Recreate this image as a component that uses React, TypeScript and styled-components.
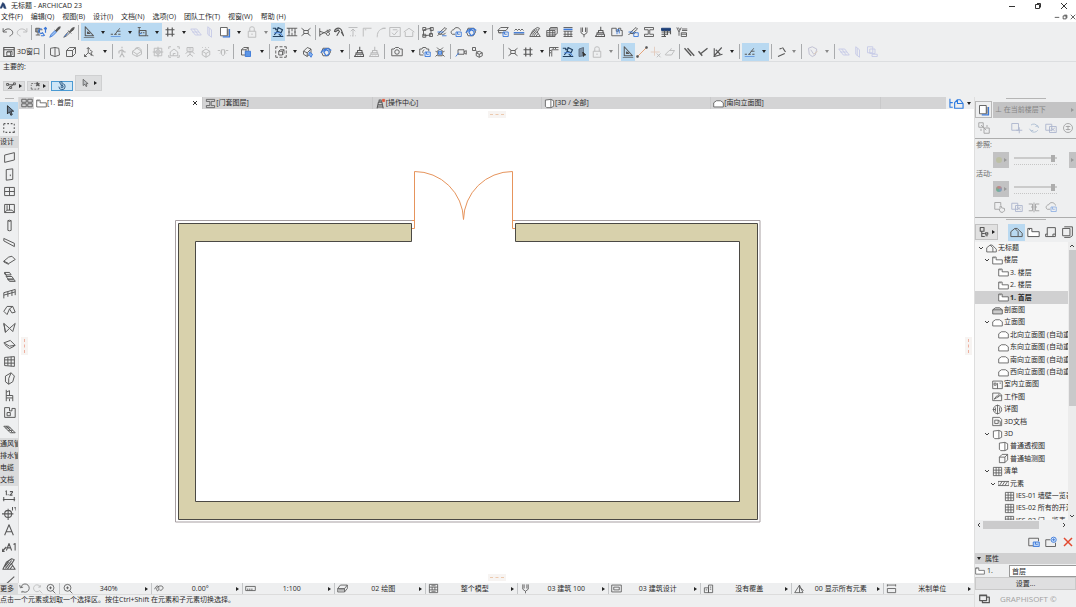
import React from 'react';
import styled, { createGlobalStyle, css } from 'styled-components';

const ink = '#585858';
const blue = '#3b78d8';
const sky = '#b9d9f1';
const bar = '#eeeff0';
const line = '#c4c6c8';

const GlobalStyle = createGlobalStyle`
  *, *::before, *::after { box-sizing: border-box; }
  html, body, #root { height: 100%; }
  body {
    margin: 0;
    background: ${bar};
    color: #2a2a2a;
    font: 7px/10px "Open Sans", "Noto Sans CJK SC", sans-serif;
    overflow: hidden;
  }
  button, input, select { font: inherit; color: inherit; }
  button { margin: 0; padding: 0; border: 0; background: none; white-space: nowrap; }
  ul { margin: 0; padding: 0; list-style: none; }
`;

/* ---------- icons ---------- */

type Stroke = [d: string, stroke?: string, fill?: string, width?: number];

const icons: Record<string, Stroke[]> = {
  undo: [['M1.5 3v5h5M2 7.500C4 4 9 2.500 12.500 5.500S14 12 10 13.500']],
  redo: [['M14.500 3v5h-5M14 7.500C12 4 7 2.500 3.500 5.500S2 12 6 13.500']],
  search: [['M1 3h5v5H1zM7 5h3M4 8v4M1 12h6', ink, '#4a4a4a88'], ['M9 4a3 3 0 1 0 1 5l3 4M8 13h4M14 2v7M12 4l2-2 2 2', blue, 'none', 1.6]],
  dropper: [['M1 15l2-4 5-5 2 2-5 5z', blue, '#9cc0f0'], ['M8 5l3 3M9 6l3-4 3-1-1 3-4 3z', ink, ink]],
  syringe: [['M1 15l3-4 4-4 1 2-4 4z', ink], ['M7 6l4 4M9 7l3-4 3-1-1 3-4 3z', ink, ink], ['M2 14l4-4', blue]],
  setsquare: [['M3 1v12h11zM6 8v2h3z', ink, 'none', 1.4], ['M1 15.500h14', ink, 'none', 1]],
  guides: [['M1 11h3m2 0h3m2 0h3', ink, 'none', 1.6], ['M6 12l7-9M9 7h5', ink], ['M1 14h13', blue, 'none', 0.8]],
  tracker: [['M3 2v8M1 2h4', ink], ['M3 6h9v7H3zM5 9h2m1 0h2M13 13h2', ink, 'none', 1.5], ['M3 10h3', blue]],
  grid: [['M5 2v12M11 2v12M2 5h12M2 11h12', ink, 'none', 1.6]],
  planeH: [['M1 4h8l6 8H7zM5 4l6 8M3 8h9', '#7d87d8']],
  planeV: [['M5 1l5 4v10l-5-4zM7 3v10', '#7d87d8']],
  sheets: [['M2 2h9v11H2z', ink, '#fff'], ['M5 14.500h9V4', blue, 'none', 1.6], ['M12 4v9', ink]],
  lock: [['M3 7h10v8H3zM5 7V3q0-2 3-2t3 2v4M8 10v2', ink]],
  gravity: [['M1 3h4v2h3M8 2l6 3-2 4-5-2zM3 12l4-5M1 14h14M9 11l3 2', '#23405f', 'none', 1.6], ['M3 9h8l3 4', blue]],
  stretch: [['M1 3h14M1 13h14M4 3v10M8 3v4m0 2v4M12 3v10M3 8h2m6 0h2', ink]],
  corners: [['M2 3l4 3M14 3l-4 3M2 13l4-3M14 13l-4-3M5 6h6v4H5z', ink]],
  trim: [['M1 3v11M1 7l9 3M1 12l13-7M10 10a2 2 0 1 0 4 1 2 2 0 1 0-4-1M11 5a2 2 0 1 0 3-1', ink]],
  wrench: [['M2 8c0-5 6-7 9-3l3 8-3-5M3 8l4-3 2 3M8 8l-3 5', ink, 'none', 1.5]],
  liftUp: [['M2 2h12M8 4v10M5 7l3-3 3 3M4 13h1m2 0h1m3 0h1', ink]],
  angle: [['M3 14V3h11M5 5h2', ink]],
  fillet: [['M3 14C3 7 7 3 14 3M3 14v1M10 3h4', ink]],
  box1: [['M1 2h14v12H1zM5 5h6M4 9l3 3 5-6', ink]],
  house: [['M1 8l7-5 7 5M3 8v6h10V8', ink]],
  nodes: [['M2 13V5l10-2v9zM1 2h4v4H1zM11 2h4v4h-4zM1 11h4v4H1zM10 10h4v4h-4z', ink]],
  pen: [['M2 13c3-5 8 1 11-4M3 10l9-8 2 2-8 7z', ink], ['M2 8h8M8 13h6', blue]],
  cloudSave: [['M3 11C0 9 2 5 5 5c1-4 8-4 9 1M3 11h4', ink], ['M8 8h7v6H8zM10 8v3h3', blue]],
  orbit: [['M4 3h8l2 5-3 5H4L2 8z', ink], ['M1 9c4-6 10-7 14-3M5 8l3-3 4 2v4l-4 2z', blue, 'none', 1.6]],
  slabSave: [['M1 6l4-4h10l-3 4zM3 9h6M2 6v3l3 0', ink], ['M8 8h7v6H8zM10 8v3h3', blue]],
  waves: [['M2 6l2-2 2 2 2-2 2 2 2-2 2 2', ink], ['M1 9h14', blue, 'none', 1.8], ['M1 11h14', ink]],
  hatch: [['M1 14L5 6l6-4 3 1-3 5 4 6zM4 13l7-9M6 14l5-7M9 14l3-4M3 11l5-6', ink]],
  layers: [['M1 6h11v8H1zM4 6l2-4h9v8l-3 2M1 9h11M1 12h11M5 6v8M9 6v8M4 4h10', ink]],
  bricks: [['M2 2h12M2 7h12M2 11h12M2 14h12M4 7v4m4-4v4m4-4v4M4 11v3m4-3v3m4-3v3', ink], ['M2 4.500h12', blue, 'none', 2]],
  pens: [['M4 2v7l4 3 4-3V2M8 12v3M6 2v6M10 2v6', ink]],
  brush: [['M9 1v5M6 6h6v3H6zM4 9h9v2H4zM4 11l-2 3h12v-3M6 14v-1m4 1v-1', ink, 'none', 1.4]],
  zones: [['M1 3h6v4h3V3h3v3h2v7H1z', ink], ['M8 11V5h3v5', blue]],
  penSave: [['M2 12c3-5 6 1 10-4M4 9l8-7 2 2-7 6z', ink], ['M2 8h6M9 9h6v5H9z', blue]],
  ibeam: [['M2 2h12v3H9v6h5v3H2v-3h5V5H2z', ink]],
  sched: [['M2 3h12v3H2z', '#1d3f78', '#1d3f78'], ['M2 8h12M2 11h8M2 14h6M6 6v8M10 6v6M14 6v5', ink, 'none', 1.5]],
  mix: [['M1 2l3 6v5M7 2L4 8M3 2l2 3M8 4h7M8 6h7M7 9h7v5H7zM7 11h7', ink]],
  window3d: [['M1 2h14v12H1zM1 5h14', ink, 'none', 1.6], ['M5 8l2-1h5v5l-2 1H5zM5 8h5v5M10 8l2-1', ink]],
  perspective: [['M2 3l6-1v12l-6-2zM8 2l5 1 1 9-6 2', ink]],
  axon: [['M2 6l4-4h8v8l-4 4H2zM2 6h8v8M10 6l4-4', ink]],
  axes: [['M7 9V2M7 9l-5 5M7 9l7 4M5 4l2-2 2 2M2 11v3h3M9 5l4 3M11 8v5', ink]],
  walk: [['M8 1v2M8 5l-4 2v3M8 5l3 3 2 0M8 5v5l-3 5M8 10l3 5', ink, 'none', 1.5]],
  cubeRot: [['M2 7l6-4 6 4-6 4zM2 7v4l6 3 6-3V7M8 11v3M5 4c4-4 8-1 9 2', ink]],
  target: [['M3 3h10v10H3zM8 1v14M1 8h14M5 8a3 3 0 1 0 6 0 3 3 0 1 0-6 0', ink]],
  frame: [['M1 4V1h3m8 0h3v3m0 8v3h-3M4 15H1v-3M3 8l5-4 5 4v5H3zM7 13v-3h3', ink]],
  person: [['M4 2h8v5H4zM8 7v5M2 10l3-2h6l3 2M4 14l4-3 4 3M6 4h4', ink]],
  cubeDot: [['M3 7l5-3 5 3v5l-5 3-5-3zM3 7l5 3 5-3M8 10v5M3 2h1m3 0h1m3 0h1', ink]],
  section: [['M1 6h3l2 2-2 2M15 6h-3l-2 2 2 2M6 5h4v6l-2 2-2-2z', ink]],
  copy3d: [['M2 5l3-3h6v5M2 5h6v7H2zM8 5l3-3', ink], ['M7 7h7v7H7z', blue, '#5c95e5']],
  marquee3d: [['M1 1h3m2 0h4m2 0h3v3m0 2v4m0 2v3h-3m-2 0H6m-2 0H1v-3m0-2V6m0-2V1', ink], ['M5 7l2-2h5v5l-2 2H5zM5 7h5v5M10 7l2-2', ink]],
  cubeFill: [['M2 7l5-5 5 2v5l-5 5-5-3zM2 7l5 2 5-5M7 9v5', ink], ['M10 8l4 3-2 4-3-4z', blue, '#8ab4f0']],
  camera: [['M1 4h3l2-2h4l2 2h3v9H1zM5 8a3 3 0 1 0 6 0 3 3 0 1 0-6 0', ink]],
  cameraSave: [['M6 12H1V4h3l1-2h4l1 2h3v3M7 5a3 3 0 0 0-1 5', ink], ['M8 8h7v6H8zM10 8v3h3', blue, '#dceafd']],
  sun: [['M5 6q3-3 6 0v7H5zM6 4L4 2M10 4l2-2M2 7l2 1m8 0l2-1M2 14l2-2m8 0l2 2', ink], ['M6 7h4v4H6z', blue, '#8ab4f0']],
  video: [['M4 5h8v6H4zM12 8l3-2v5l-3-2', ink], ['M1 14l4-5', blue]],
  chain: [['M2 2h4v4H2zM7 9l4-2 4 2v4l-4 2-4-2zM7 9l4 2 4-2M11 11v4M6 6l3 2', ink]],
  ruler: [['M2 14V2h12M5 14V5h9M2 6h2m-2 3h2M7 2v2m3-2v2', ink]],
  column: [['M4 4l6-2v11l-6 1z', '#5b6b7d', '#7e93a8'], ['M9 8l4 4h-2l-1 2z', '#333', '#333']],
  rubber: [['M2 14L14 2', '#e39a6c'], ['M1 13h2v2H1zM13 1h2v2h-2z', ink, ink]],
  cross: [['M6 1v12M1 8h12', '#d08a62'], ['M9 10l5 5M14 10l-5 5', ink]],
  eraser: [['M2 11l5-5h7l-4 6H2zM8 6l2-3', ink]],
  parallel: [['M2 3l9 10M6 3l9 10', ink, 'none', 1.8]],
  perp: [['M2 7l5 6M4 11L14 3', ink, 'none', 1.8]],
  bisect: [['M2 14L13 2M3 3v11l11-3M5 5l6 6', ink, 'none', 1.5]],
  surface: [['M9 3l-3 1M10 2l4 6M13 10l-9 4', ink, 'none', 1.6]],
  morph: [['M2 3l5-2 6 3-2 8-4 2-4-3zM5 5l4 6', '#65639a'], ['M9 11l5-4', '#b5793a']],
  groupBoxes: [['M2 1h7v8H2zM5 4h7v6H5zM8 11h7v3H8z', '#7d87d8']],

  arrow: [['M5 1v12l3-3 2 5 2-1-2-5h4z', '#222', '#6b7f95']],
  arrowLight: [['M5 2v10l3-2 2 4 1-1-1-4h3z', ink, '#b9bcc0']],
  marquee: [['M2 3h2m2 0h2m2 0h2m2 0v2m0 2v2m0 2v2h-2m-2 0H8m-2 0H4m-2 0v-2m0-2V7m0-2V3', ink]],
  wall: [['M2 5l12-3v9L2 14z', ink]],
  door: [['M4 2l8-1v13l-8 1zM9 8v2', ink]],
  windowT: [['M2 3h12v10H2zM8 3v10M2 8h12', ink]],
  corner: [['M2 3h12v10H2zM8 3v7M2 13l3-3h6l3 3M5 10V4', ink]],
  pillar: [['M6 2q2-1 4 0v12q-2 1-4 0zM6 2q2 2 4 0', ink]],
  beam: [['M1 3l13 6v4L1 6z', ink]],
  slab: [['M1 10l6-5 4-1 4 4-8 5zM1 10v1l6 3', ink]],
  stair: [['M2 3l6 0 2 3H4zM4 6v2h7l2 3H6L4 8M6 11v1h8l1 2H8zM2 3v2l2 1', ink]],
  railing: [['M1 14V7l14-4v7M1 10l14-4M6 12V6M11 11V4', ink]],
  roof: [['M1 9l4-6h7l3 7-4 1-3-5-3 7zM8 6l4-3', ink]],
  shell: [['M1 3l7 6 7-6-3 10-4-4-5 5zM1 3l2 11', ink]],
  skylight: [['M1 6l8-3 6 6-7 1zM2 8l6 5 6-3', ink]],
  curtain: [['M2 3l12-1v12l-12-1zM6 3v10M10 2v12M2 6h12M2 10h12', ink]],
  morphT: [['M3 5l7-4 4 4-2 7-5 3-4-3zM10 1L7 8v7', ink]],
  chair: [['M4 1v14M4 8h8v7M4 4l4-2v6M8 12v3M4 11h8', ink]],
  zone: [['M2 2h6v4h3V3h4v11H2zM5 8h4v4H5z', ink]],
  mesh: [['M1 4h6l8 8H9zM4 4l8 8M3 6h6M6 9h6', ink]],
  dimension: [['M1 12h14M2 9v5M14 9v5M4 3l1-1v5M7 6v1M9 3h3v1l-3 3h3', ink]],
  level: [['M3 9a4 4 0 1 0 8 0 4 4 0 1 0-8 0M7 3v13M0 9h13M12 1v4M14 2h2v3', ink]],
  textA: [['M3 14L8 2l5 12M5 10h6', ink]],
  label: [['M0 13l5-5M0 10v3h3', ink, 'none', 1.6], ['M5 12l3-8 3 8M6 9h4M13 5l2-1v8', ink]],
  diag: [['M2 14L14 3', ink]],

  overview: [['M1 3h6v4H1zM9 3h6v4H9zM1 9h6v4H1zM9 9h6v4H9z', ink]],
  folder: [['M1 13V3h5v4h9v6zM3 3v2', ink, '#fff']],
  tower: [['M3 15l2-9h5l2 9M5 10h5M4 13h7M6 6V3h3v3', ink, 'none', 1.5], ['M11 2h3v3h-3z', '#e0563b', '#e0563b']],
  box: [['M2 3l8-1v12H4l-2-2zM10 2l4 2v8l-4 2', ink, '#fff']],
  elevation: [['M1 13V7l4-3h6l4 3v6z', ink, '#fff']],
  elevFill: [['M1 13V7l4-3h6l4 3v6zM1 7h14', ink, '#ccc']],
  interior: [['M1 3h14v11H1zM3 6h3v3H3zM8 6v8M11 6h2', ink]],
  worksheet: [['M1 3h10l3 3v8H1zM3 12l4-5 3 1-7 4M10 4v3h4', ink]],
  detail: [['M2 8a6 6 0 1 0 12 0A6 6 0 1 0 2 8M8 1v14M5 5v6M11 5v6M1 8h4', ink]],
  doc3d: [['M1 2h10l3 3v9H1zM4 6h5v5H4zM9 6l3 2v5', ink]],
  list: [['M2 2h12v12H2zM6 2v12M10 2v12M2 6h12M2 10h12', ink]],
  element: [['M0 5h16v6H0zM2 11l4-6M6 11l4-6M10 11l4-6', ink]],
  project: [['M1 13V7l5-4 4 4v6zM6 3h3l6 6v4h-5', ink]],
  tree: [['M3 2h5v5H3zM5 7v7h4M5 10h4M10 9h3v2h-3zM10 13h3', ink, 'none', 1.5]],
  bluehome: [['M1 3v9h3M1 7h3M6 13V7l3-3 3 0 3 4v5zM9 4v4h6', '#2e7be0', 'none', 1.2]],
  layout: [['M4 12V2h10v11H2v-3h2M11 13v-3h3', ink]],
  publisher: [['M2 3h9v9H2zM4 1h10v11l-3 2H4', ink]],
  ghost1: [['M1 1h6v6H1zM8 8h7v7H8zM4 4l7 7M4 9v3M12 4v3', ink]],
  addSheet: [['M1 2h9v9H1zM11 7v8M7 11h8', '#6d7fae']],
  rotate: [['M4 4a6 6 0 0 1 9 2M13 11a6 6 0 0 1-9 1M2 9l2 3 3-1M14 8l-1-3-3 1', '#6d8fb8']],
  swap: [['M1 3h8v8H1zM6 6h9v8H6zM8 8l5 4M13 8l-5 4', '#6d7fae']],
  split: [['M1 4h5v9H1M15 4h-5v9h5M8 2v13M4 8h3M9 8h3', ink]],
  reset: [['M2 8a6 6 0 1 0 12 0A6 6 0 1 0 2 8M5 6h6M5 10h6M8 5v6', ink]],
  hand: [['M7 11H1V2h8v4', ink], ['M8 10V7h2v2l4 1v3l-2 2H9l-2-3z', ink]],
  saveView: [['M8 13H1V3h13v4', ink], ['M7 8h8v6H7zM10 8v3h3', blue, '#b9d3f8']],
  addView: [['M7 5H1v9h13V9', ink], ['M8 5a3.500 3.500 0 1 0 7 0 3.500 3.500 0 1 0-7 0M11.500 3v4M9.500 5h4', blue, '#dceafd']],
  cascade: [['M1 3h10v8H1zM1 4h10', ink, 'none', 1.8], ['M5 11v3h10V6h-4', ink, 'none', 1.8]],
  zoomIn: [['M3 7a5 5 0 1 0 10 0A5 5 0 1 0 3 7M11 11l4 4M8 5v4M6 7h4', ink]],
  zoomBack: [['M3 6a6 6 0 1 1 2 6M1 3l1 4 4-1M3 13h3', ink]],
  zoomNext: [['M12 6a5 5 0 1 0-1 5l4 4M12 3v3H9', ink]],
  angleT: [['M1 9c2-6 6-6 6-1s-4 4-3 0 8-5 9-2-3 6-5 4', ink]],
  scale: [['M1 5h14v6H1zM4 8v3M7 8v3M10 8v3', ink]],
  layer: [['M1 8l4-5h10l-4 5zM1 8v5h10l4-5V3M2 10h9M11 8v5', ink]],
  model: [['M2 2h12v12H2zM2 6h12M2 10h12M6 6v4M10 6v4M5 4h6M5 12h6', ink]],
  override: [['M1 3h14v10H1zM4 6h8v4H4z', ink]],
  building: [['M2 7h6v7H2zM8 3h6v11H8zM10 6h2M10 9h2M4 10h2', ink]],
  showAll: [['M1 14h12L8 3zM8 3v11M9 7l5 4', ink]],
  units: [['M2 2v3m12-3v3M2 3h12M2 8h12v6H2z', ink]],
  logo: [['M0 14L6 1l4 3 4 11-5-1-2-6-3 6z', '#26406f', '#26406f']],
  polyline: [['M1 4h3v3H1zM6 9h3v3H6zM12 3h3v3h-3zM4 6h8M3 13l4-4 6-4', ink, 'none', 1.5]],
  marqStar: [['M2 4h3m2 0h2m-7 2v2m0 2v3h3m2 0h3m2 0h2v-2', ink], ['M12 2l1 2 2 0-1 2 1 2-3-1-2 1 1-3-1-2h2z', ink, ink]],
  magnet: [['M3 9a5 5 0 1 0 6-5M6 9a2 2 0 1 0 2-2M8 9L4 2l4-1z', '#2c5c88', 'none', 1.5]],
};

const Svg = styled.svg`
  display: block;
  flex: none;
  stroke-linejoin: round;
`;

const Icon = ({ name, size = 12 }: { name: string; size?: number }) => (
  <Svg width={size} height={size} viewBox="0 0 16 16" aria-hidden="true">
    {icons[name].map(([d, stroke = ink, fill = 'none', width = 1.2], i) => (
      <path key={i} d={d} stroke={stroke} fill={fill} strokeWidth={width} />
    ))}
  </Svg>
);

const Caret = styled.span<{ $dir?: 'down' | 'right'; $dim?: boolean }>`
  flex: none;
  width: 0;
  height: 0;
  border: 2px solid transparent;
  ${p => p.$dir === 'right'
    ? css`border-left: 3px solid ${p.$dim ? '#999' : '#222'}; border-right: 0;`
    : css`border-top: 3px solid ${p.$dim ? '#888' : '#222'}; border-bottom: 0;`}
`;

/* ---------- window chrome ---------- */

const Window = styled.div`
  display: flex;
  flex-direction: column;
  height: 100vh;
`;

const TitleBar = styled.header`
  display: flex;
  align-items: center;
  gap: 4px;
  height: 11px;
  background: #fff;
`;

const Title = styled.h1`
  flex: 1;
  margin: 0;
  font: inherit;
`;

const WindowButtons = styled.div<{ $gap: number; $right: number }>`
  display: flex;
  gap: ${p => p.$gap}px;
  padding-right: ${p => p.$right}px;
`;

const MenuBar = styled.nav`
  display: flex;
  align-items: center;
  gap: 8px;
  height: 11px;
  padding-left: 1px;
  background: #fff;
`;

const Grow = styled.span`
  flex: 1;
`;

/* ---------- toolbars ---------- */

const Toolbar = styled.div`
  display: flex;
  align-items: center;
  height: 20px;
  padding-left: 1px;
  &:last-of-type { border-bottom: 1px solid #dcdee0; }
`;

const ToolCell = styled.button<{ $w: number; $on?: boolean; $dim?: boolean }>`
  display: flex;
  flex: none;
  align-items: center;
  justify-content: center;
  width: ${p => p.$w}px;
  height: 18px;
  background: ${p => (p.$on ? sky : 'none')};
  svg { opacity: ${p => (p.$dim ? 0.35 : 1)}; }
`;

const Rule = styled.span`
  flex: none;
  width: 1px;
  height: 15px;
  margin: 0 2px;
  background: #a9abad;
`;

const Gap = styled.span`
  flex: none;
  width: 16px;
`;

const ToolText = styled.button`
  width: 25px;
  text-align: left;
`;

type Item = { k: 'icon' | 'caret' | 'rule' | 'gap' | 'text'; name?: string; w?: number; on?: boolean; dim?: boolean };
const S = 14, M = 16, L = 17, XL = 20;
const t = (name: string, w = S, flag?: 'on' | 'dim'): Item => ({ k: 'icon', name, w, on: flag === 'on', dim: flag === 'dim' });
const caret = (flag?: 'on' | 'dim'): Item => ({ k: 'caret', on: flag === 'on', dim: flag === 'dim' });
const rule: Item = { k: 'rule' };

const standardBar: Item[] = [
  t('undo'), t('redo', S, 'dim'), rule, t('search'), t('dropper'), t('syringe'), rule,
  t('setsquare', M, 'on'), caret('on'), t('guides', M, 'on'), caret('on'), t('tracker', M, 'on'), caret('on'),
  t('grid', M), caret(), t('planeH', S, 'dim'), t('planeV', S, 'dim'), t('sheets', M), caret(),
  t('lock', M, 'dim'), caret('dim'), t('gravity', S, 'on'), t('stretch'), t('corners'), rule,
  t('trim'), t('wrench'), t('liftUp', S, 'dim'), t('angle', S, 'dim'), t('fillet', S, 'dim'), t('box1', S, 'dim'), t('house', S, 'dim'), rule,
  t('nodes'), t('pen'), t('cloudSave'), t('orbit', M), caret(), rule,
  t('slabSave', M), t('waves', M), t('hatch', M), t('layers', L), t('bricks', M), t('pens', M), t('brush', M),
  t('zones', L), t('penSave', M), t('ibeam', M), t('sched', L), t('mix', M),
];

const viewBar: Item[] = [
  t('window3d', M), { k: 'text', name: '3D窗口' }, rule, t('perspective', M), t('axon', M), t('axes', XL), caret(), rule,
  t('walk', S, 'dim'), t('cubeRot', M, 'dim'), rule,
  t('target', M, 'dim'), t('frame', M, 'dim'), t('person', M, 'dim'), t('cubeDot', M, 'dim'), t('section', L, 'dim'), rule,
  t('copy3d', XL), caret(), rule, t('marquee3d', L), caret(), t('cubeFill', M), t('orbit', XL), caret(), rule,
  t('brush'), t('brush', M, 'dim'), rule, t('camera', XL), caret(), t('cameraSave'), t('sun', M), rule,
  t('video', M), t('chain', M), { k: 'gap' }, rule, t('corners'), t('grid', M), caret(), t('ruler'),
  t('gravity', S, 'on'), t('column', S, 'on'), t('lock', M, 'dim'), caret('dim'), rule,
  t('setsquare', S, 'on'), t('rubber'), t('cross', S, 'dim'), t('eraser', S, 'dim'), rule,
  t('parallel'), t('perp'), t('bisect', M), caret(), rule, t('guides', M, 'on'), caret('on'), rule,
  t('surface'), caret('dim'), rule, t('morph', L, 'dim'), caret('dim'), rule,
  t('planeH', S, 'dim'), t('planeV', S, 'dim'), t('groupBoxes', S, 'dim'),
];

const ToolRow = ({ items, label }: { items: Item[]; label: string }) => (
  <Toolbar role="toolbar" aria-label={label}>
    {items.map((it, i) => {
      if (it.k === 'rule') return <Rule key={i} />;
      if (it.k === 'gap') return <Gap key={i} />;
      if (it.k === 'text') return <ToolText key={i}>{it.name}</ToolText>;
      if (it.k === 'caret') return <ToolCell key={i} $w={11} $on={it.on} aria-label="more"><Caret $dim={it.dim} /></ToolCell>;
      return <ToolCell key={i} $w={it.w!} $on={it.on} $dim={it.dim} aria-label={it.name}><Icon name={it.name!} /></ToolCell>;
    })}
  </Toolbar>
);

const InfoBox = styled.section`
  display: flex;
  flex-direction: column;
  justify-content: space-between;
  height: 35px;
  padding: 0 3px 6px;
`;

const InfoButtons = styled.div`
  display: flex;
  align-items: flex-end;
  gap: 2px;
`;

const InfoButton = styled.button<{ $tall?: boolean; $on?: boolean }>`
  display: flex;
  align-items: center;
  justify-content: space-evenly;
  width: ${p => (p.$tall ? 27 : 22)}px;
  height: ${p => (p.$tall ? 16 : 10)}px;
  border: 1px solid ${p => (p.$on ? '#4b9ad2' : '#cfd0d1')};
  background: ${p => (p.$on ? '#cde6f7' : '#dddedf')};
`;

/* ---------- workspace ---------- */

const Body = styled.div`
  display: flex;
  flex: 1;
  min-height: 0;
`;

const Workspace = styled.div`
  display: flex;
  flex: 1;
  flex-direction: column;
  min-width: 0;
`;

const Upper = styled.div`
  display: flex;
  flex: 1;
  min-height: 0;
`;

const Toolbox = styled.aside`
  flex: none;
  width: 19px;
  overflow: hidden;
  border-right: 1px solid #dcdcdc;
`;

const Grip = styled.div<{ $w: number }>`
  width: ${p => p.$w}px;
  height: 4px;
  margin: 0 auto;
  border-top: 1px solid transparent;
  &::after { content: ''; display: block; height: 1px; background: #b5b5b5; }
`;

const ToolGroup = styled.div`
  padding-top: 1px;
`;

const Tool = styled.button<{ $on?: boolean }>`
  display: flex;
  align-items: center;
  justify-content: center;
  width: 18px;
  height: 17px;
  background: ${p => (p.$on ? sky : 'none')};
`;

const GroupTitle = styled.button`
  display: block;
  width: 18px;
  height: 12px;
  overflow: hidden;
  background: #dadbdc;
  text-align: left;
`;

const Stage = styled.div`
  display: flex;
  flex: 1;
  flex-direction: column;
  min-width: 0;
`;

const TabBar = styled.div`
  display: flex;
  height: 12px;
  padding-left: 1px;
  background: #d4d4d5;
`;

const TabOverview = styled.button`
  display: flex;
  align-items: center;
  justify-content: center;
  width: 14px;
`;

const Tab = styled.div<{ $on?: boolean }>`
  display: flex;
  flex: 5 1 0;
  align-items: center;
  min-width: 0;
  padding: 0 3px 0 2px;
  border-right: 1px solid #c9c9ca;
  background: ${p => (p.$on ? '#fff' : 'none')};
`;

const TabLabel = styled.button`
  display: flex;
  flex: 1;
  align-items: center;
`;

const TabFill = styled.span`
  flex: 2 1 0;
`;

const TabMenu = styled.button`
  display: flex;
  align-items: center;
  justify-content: space-evenly;
  width: 28px;
  background: ${bar};
`;

const Canvas = styled.main`
  position: relative;
  flex: 1;
  min-height: 0;
  background: #fff;
`;

const Plan = styled.svg`
  display: block;
  width: 100%;
  height: 100%;
`;

const Handle = styled.span<{ $side: 'top' | 'bottom' | 'left' | 'right' }>`
  position: absolute;
  display: flex;
  align-items: center;
  justify-content: center;
  background: #f7f4f2;
  ${p => (p.$side === 'top' || p.$side === 'bottom'
    ? css`left: 50%; width: 18px; height: 7px; margin-left: -9px; ${p.$side}: 2px;
        &::after { content: ''; width: 14px; border-top: 1px dashed #ecc9ae; }`
    : css`top: 50%; width: 7px; height: 18px; margin-top: -9px; ${p.$side}: 2px;
        &::after { content: ''; height: 14px; border-left: 1px dashed #eeb0a0; }`)}
`;

const QuickBar = styled.div`
  display: flex;
  height: 12px;
  border-bottom: 1px solid #dcdcdc;
`;

const ZoomButtons = styled.div`
  display: flex;
  align-items: center;
  width: 41px;
  padding-left: 1px;
  button { width: 13px; }
  button:nth-child(2) { opacity: 0.35; }
`;

const Quick = styled.button`
  display: flex;
  flex: 1 1 0;
  align-items: center;
  min-width: 0;
  padding: 0 3px 0 2px;
  border-left: 1px solid ${line};
  span:nth-of-type(1) { flex: 1; text-align: center; }
`;

const Status = styled.footer`
  height: 12px;
`;

const FloorPlan = () => (
  <Plan viewBox="1 0 955 474" role="img" aria-label="首层">
    <path d="M394 111.500H157.500V413H742V111.500H497" fill="none" stroke="#a79fa2" />
    <path
      d="M393.500 114.500H160.500V410.500H739.500V114.500H497.500V132.500H721.500V392.500H177.500V132.500H393.500Z"
      fill="#d8d1ac"
      stroke="#4b4944"
    />
    <path
      d="M394 119.500H396.500V62.500A49 49 0 0 1 445.500 110.500A49 49 0 0 1 494.500 62.500V119.500H497M394 111.500H396.500M494.500 111.500H497"
      fill="none"
      stroke="#e6945c"
    />
  </Plan>
);

/* ---------- right palettes ---------- */

const Palette = styled.aside`
  display: flex;
  flex: none;
  flex-direction: column;
  width: 102px;
  overflow: hidden;
  border-left: 1px solid #dedede;
`;

const PaletteRow = styled.div<{ $h: number; $line?: boolean }>`
  display: flex;
  flex: none;
  align-items: center;
  height: ${p => p.$h}px;
  border-bottom: ${p => (p.$line ? 1 : 0)}px solid #adadad;
`;

const PaletteCell = styled.button<{ $on?: boolean; $dim?: boolean }>`
  display: flex;
  flex: none;
  align-items: center;
  justify-content: center;
  width: 17px;
  height: 17px;
  background: ${p => (p.$on ? sky : 'none')};
  svg { opacity: ${p => (p.$dim ? 0.5 : 1)}; }
`;

const TraceToggle = styled(PaletteCell)`
  border: 1px solid #b8b8b8;
`;

const TraceSelect = styled.button`
  display: flex;
  flex: 1;
  align-items: center;
  justify-content: space-between;
  height: 16px;
  margin-left: 1px;
  padding: 0 2px;
  background: #c3c3c4;
  color: #858585;
`;

const Caption = styled.label`
  display: block;
  flex: none;
  height: 12px;
  padding: 1px 1px 0;
  color: #666;
`;

const Swatch = styled.button<{ $tint: string }>`
  display: flex;
  align-items: center;
  justify-content: center;
  gap: 2px;
  width: 16px;
  height: 16px;
  margin-left: 18px;
  background: #c2c2c3;
  &::before { content: ''; width: 6px; height: 6px; border-radius: 3px; background: ${p => p.$tint}; }
`;

const SliderBox = styled.div`
  flex: 1;
  min-width: 0;
  margin: 0 12px 0 5px;
`;

const Slider = styled.input`
  display: block;
  width: 100%;
  height: 8px;
  margin: 0;
  appearance: none;
  background: linear-gradient(#cbcbcb, #cbcbcb) center / 100% 2px no-repeat;
  &::-webkit-slider-thumb { appearance: none; width: 4px; height: 7px; background: #adadad; }
`;

const Ticks = styled.div`
  height: 1px;
  border-top: 1px dotted #c6c6c6;
  margin-top: 2px;
`;

const SideSpace = styled.span`
  width: 7px;
`;

const SideButton = styled.button`
  display: flex;
  align-items: center;
  justify-content: center;
  width: 7px;
  height: 16px;
  background: #c2c2c3;
`;

const NavButton = styled.button`
  display: flex;
  align-items: center;
  justify-content: space-evenly;
  width: 25px;
  height: 16px;
  margin-right: 10px;
  border: 1px solid #c2c2c2;
  background: #e1e1e1;
`;

const TreeArea = styled.div`
  display: flex;
  flex: 1;
  min-height: 0;
  background: #f6f6f6;
`;

const TreeList = styled.ul`
  flex: 1;
  min-width: 0;
  overflow: hidden;
`;

const TreeItem = styled.li<{ $level: number; $on?: boolean }>`
  display: flex;
  align-items: center;
  gap: 1px;
  height: 12px;
  padding-left: ${p => 2 + p.$level * 6}px;
  background: ${p => (p.$on ? '#d0d0d1' : 'none')};
  font-weight: ${p => (p.$on ? 700 : 400)};
  white-space: nowrap;
  &:nth-child(5n + 3), &:nth-child(5n) { height: 13px; }
`;

const Chevron = ({ dir = 'down', hidden }: { dir?: 'down' | 'up' | 'left' | 'right'; hidden?: boolean }) => (
  <Svg width="8" height="8" viewBox="0 0 8 8" aria-hidden="true">
    {!hidden && (
      <path
        d={{ down: 'M2 3l2 2 2-2', up: 'M2 5l2-2 2 2', left: 'M5 2L3 4l2 2', right: 'M3 2l2 2-2 2' }[dir]}
        fill="none"
        stroke="#444"
      />
    )}
  </Svg>
);

const ScrollV = styled.div`
  display: flex;
  flex-direction: column;
  justify-content: space-between;
  width: 8px;
  background: #ececec;
`;

const ThumbV = styled.span`
  flex: 0 1 56%;
  margin: 0 0 auto 1px;
  background: #c9c9ca;
`;

const ScrollH = styled.div`
  display: flex;
  flex: none;
  align-items: center;
  justify-content: space-between;
  height: 10px;
  padding-right: 8px;
`;

const ThumbH = styled.span`
  width: 60%;
  height: 8px;
  margin: 0 auto 0 0;
  background: #cbcbcc;
`;

const Actions = styled(PaletteRow)`
  justify-content: flex-end;
`;

const PropsHead = styled.button`
  display: flex;
  flex: none;
  align-items: center;
  gap: 4px;
  height: 11px;
  padding-left: 2px;
  background: #d0d0d1;
`;

const PropsRow = styled.label`
  display: flex;
  flex: none;
  align-items: center;
  gap: 2px;
  height: 13px;
  > span { width: 20px; }
`;

const NameInput = styled.input`
  flex: 1;
  min-width: 0;
  height: 12px;
  padding: 0 2px;
  border: 1px solid #999;
  border-right: 0;
  border-radius: 0;
  background: #fff;
`;

const SettingsButton = styled.button`
  flex: none;
  height: 13px;
  border: 1px solid #c9c9c9;
  background: #dfdfe0;
`;

const Brand = styled.footer`
  display: flex;
  flex: none;
  align-items: center;
  gap: 10px;
  height: 17px;
  padding-left: 4px;
  color: #a2a2a2;
  font-size: 8px;
`;

/* ---------- content ---------- */

const menus = ['文件(F)', '编辑(Q)', '视图(B)', '设计(I)', '文档(N)', '选项(O)', '团队工作(T)', '视窗(W)', '帮助 (H)'];

const designTools = ['wall', 'door', 'windowT', 'corner', 'pillar', 'beam', 'slab', 'stair', 'railing', 'roof', 'shell', 'skylight', 'curtain', 'morphT', 'chair', 'zone', 'mesh'];
const documentTools = ['dimension', 'level', 'textA', 'label', 'hatch', 'diag'];

const tabs: [string, string][] = [
  ['folder', '[1. 首层]'],
  ['ibeam', '[门套图层]'],
  ['tower', '[操作中心]'],
  ['box', '[3D / 全部]'],
  ['elevation', '[南向立面图]'],
];

const quick: [string, string][] = [
  ['zoomIn', '340%'], ['angleT', '0.00°'], ['scale', '1:100'], ['layer', '02 绘图'], ['model', '整个模型'],
  ['pens', '03 建筑 100'], ['override', '03 建筑设计'], ['building', '没有覆盖'], ['showAll', '00 显示所有元素'], ['units', '米制单位'],
];

const tree: [level: number, open: boolean, icon: string, text: string][] = [
  [0, true, 'project', '无标题'],
  [1, true, 'folder', '楼层'],
  [2, false, 'folder', '3. 楼层'],
  [2, false, 'folder', '2. 楼层'],
  [2, false, 'folder', '1. 首层'],
  [1, false, 'elevFill', '剖面图'],
  [1, true, 'elevation', '立面图'],
  [2, false, 'elevation', '北向立面图 (自动重'],
  [2, false, 'elevation', '东向立面图 (自动重'],
  [2, false, 'elevation', '南向立面图 (自动重'],
  [2, false, 'elevation', '西向立面图 (自动重'],
  [1, false, 'interior', '室内立面图'],
  [1, false, 'worksheet', '工作图'],
  [1, false, 'detail', '详图'],
  [1, false, 'doc3d', '3D文档'],
  [1, true, 'box', '3D'],
  [2, false, 'box', '普通透视图'],
  [2, false, 'axon', '普通轴测图'],
  [1, true, 'list', '清单'],
  [2, true, 'element', '元素'],
  [3, false, 'list', 'IES-01 墙壁一览表'],
  [3, false, 'list', 'IES-02 所有的开洞'],
  [3, false, 'list', 'IES-03 门一览表'],
];

const TraceSlider = ({ label, tint, id, more }: { label: string; tint: string; id: string; more?: boolean }) => (
  <>
    <Caption htmlFor={id}>{label}</Caption>
    <PaletteRow $h={17}>
      <Swatch $tint={tint} aria-label={label}><Caret $dir="right" $dim /></Swatch>
      <SliderBox>
        <Slider id={id} type="range" defaultValue={95} />
        <Ticks />
      </SliderBox>
      {more ? <SideButton aria-label="more"><Caret $dir="right" $dim /></SideButton> : <SideSpace />}
    </PaletteRow>
  </>
);

const WindowMark = ({ d, size }: { d: string; size: number }) => (
  <Svg width={size} height={size} viewBox="0 0 8 8"><path d={d} fill="none" stroke="#333" /></Svg>
);

const marks = [
  ['最小化', 'M1 4.500h6'],
  ['还原', 'M1.500 2.500h4v4h-4zM3 1.500h3.500v4'],
  ['关闭', 'M1 1l6 6M7 1l-6 6'],
];

export default function App() {
  return (
    <>
      <GlobalStyle />
      <Window>
        <TitleBar>
          <Icon name="logo" size={7} />
          <Title>无标题 - ARCHICAD 23</Title>
          <WindowButtons $gap={18} $right={8}>
            {marks.map(([label, d]) => <button key={label} aria-label={label}><WindowMark d={d} size={8} /></button>)}
          </WindowButtons>
        </TitleBar>
        <MenuBar>
          {menus.map(m => <button key={m}>{m}</button>)}
          <Grow />
          <WindowButtons $gap={2} $right={0}>
            {marks.map(([label, d]) => <button key={label} aria-label={label}><WindowMark d={d} size={6} /></button>)}
          </WindowButtons>
        </MenuBar>
        <div>
          <ToolRow items={standardBar} label="标准" />
          <ToolRow items={viewBar} label="3D" />
        </div>
        <InfoBox>
          <span>主要的:</span>
          <InfoButtons>
            <InfoButton aria-label="几何方法"><Icon name="polyline" size={10} /><Caret $dir="right" /></InfoButton>
            <InfoButton aria-label="选取框"><Icon name="marqStar" size={10} /><Caret $dir="right" /></InfoButton>
            <InfoButton aria-label="快速选择" $on><Icon name="magnet" size={10} /></InfoButton>
            <InfoButton aria-label="箭头" $tall><Icon name="arrowLight" size={10} /><Caret $dir="right" /></InfoButton>
          </InfoButtons>
        </InfoBox>
        <Body>
          <Workspace>
            <Upper>
              <Toolbox>
                <Grip $w={9} />
                <ToolGroup>
                  <Tool $on aria-label="箭头"><Icon name="arrow" size={11} /></Tool>
                  <Tool aria-label="选取框"><Icon name="marquee" size={14} /></Tool>
                </ToolGroup>
                <GroupTitle>设计</GroupTitle>
                <ToolGroup>
                  {designTools.map(n => <Tool key={n} aria-label={n}><Icon name={n} size={13} /></Tool>)}
                </ToolGroup>
                {['通风管', '排水管', '电缆', '文档'].map(n => <GroupTitle key={n}>{n}</GroupTitle>)}
                <ToolGroup>
                  {documentTools.map(n => <Tool key={n} aria-label={n}><Icon name={n} size={14} /></Tool>)}
                </ToolGroup>
              </Toolbox>
              <Stage>
                <TabBar>
                  <TabOverview aria-label="标签概览"><Icon name="overview" /></TabOverview>
                  {tabs.map(([icon, text], i) => (
                    <Tab key={text} $on={i === 0}>
                      <TabLabel><Icon name={icon} size={11} />{text}</TabLabel>
                      {i === 0 && <button aria-label="关闭标签"><WindowMark d="M2 2l4 4M6 2l-4 4" size={8} /></button>}
                    </Tab>
                  ))}
                  <TabFill />
                  <TabMenu aria-label="弹出式浏览器"><Icon name="bluehome" size={15} /><Caret /></TabMenu>
                </TabBar>
                <Canvas>
                  <FloorPlan />
                  <Handle $side="top" />
                  <Handle $side="bottom" />
                  <Handle $side="left" />
                  <Handle $side="right" />
                </Canvas>
              </Stage>
            </Upper>
            <QuickBar>
              <GroupTitle>更多</GroupTitle>
              <ZoomButtons>
                {['zoomBack', 'zoomNext', 'zoomIn'].map(n => <button key={n} aria-label={n}><Icon name={n} size={11} /></button>)}
              </ZoomButtons>
              {quick.map(([icon, text]) => (
                <Quick key={text}><Icon name={icon} size={11} /><span>{text}</span><Caret $dir="right" /></Quick>
              ))}
            </QuickBar>
            <Status>点击一个元素或划取一个选择区。按住Ctrl+Shift 在元素和子元素切换选择。</Status>
          </Workspace>
          <Palette>
            <Grip $w={40} />
            <PaletteRow $h={17}>
              <TraceToggle aria-label="描绘参照"><Icon name="sheets" /></TraceToggle>
              <TraceSelect><span>⊥ 在当前楼层下</span><Caret $dir="right" $dim /></TraceSelect>
            </PaletteRow>
            <PaletteRow $h={21} $line>
              <PaletteCell $dim aria-label="参照"><Icon name="ghost1" /></PaletteCell>
              <Gap />
              {['addSheet', 'rotate', 'swap', 'reset'].map(n => <PaletteCell key={n} $dim aria-label={n}><Icon name={n} /></PaletteCell>)}
            </PaletteRow>
            <TraceSlider label="参照:" tint="#bcbfa4" id="reference" more />
            <TraceSlider label="活动:" tint="conic-gradient(#c98080, #80a0c0, #70b090, #c98080)" id="active" />
            <PaletteRow $h={21} $line>
              <Gap />
              {['hand', 'swap', 'split', 'cloudSave'].map(n => <PaletteCell key={n} $dim aria-label={n}><Icon name={n} /></PaletteCell>)}
            </PaletteRow>
            <Grip $w={40} />
            <PaletteRow $h={20}>
              <NavButton aria-label="项目选择"><Icon name="tree" /><Caret $dir="right" /></NavButton>
              {['project', 'folder', 'layout', 'publisher'].map((n, i) => <PaletteCell key={n} $on={i === 0} aria-label={n}><Icon name={n} size={13} /></PaletteCell>)}
            </PaletteRow>
            <TreeArea>
              <TreeList>
                {tree.map(([level, open, icon, text], i) => (
                  <TreeItem key={i} $level={level} $on={i === 4}>
                    <Chevron hidden={!open} />
                    <Icon name={icon} size={11} />
                    {text}
                  </TreeItem>
                ))}
              </TreeList>
              <ScrollV><Chevron dir="up" /><ThumbV /><Chevron /></ScrollV>
            </TreeArea>
            <ScrollH><Chevron dir="left" /><ThumbH /><Chevron dir="right" /></ScrollH>
            <Actions $h={23}>
              <PaletteCell aria-label="保存视图"><Icon name="saveView" /></PaletteCell>
              <PaletteCell aria-label="新建"><Icon name="addView" /></PaletteCell>
              <PaletteCell aria-label="删除">
                <Svg width="10" height="10" viewBox="0 0 10 10"><path d="M1 1l8 8M9 1L1 9" stroke="#e2492f" strokeWidth="1.500" /></Svg>
              </PaletteCell>
            </Actions>
            <PropsHead><Caret />属性</PropsHead>
            <PropsRow>
              <Icon name="folder" size={10} />
              <span>1.</span>
              <NameInput defaultValue="首层" />
            </PropsRow>
            <SettingsButton>设置...</SettingsButton>
            <Brand><Icon name="cascade" size={11} /><span>GRAPHISOFT ©</span></Brand>
          </Palette>
        </Body>
      </Window>
    </>
  );
}
